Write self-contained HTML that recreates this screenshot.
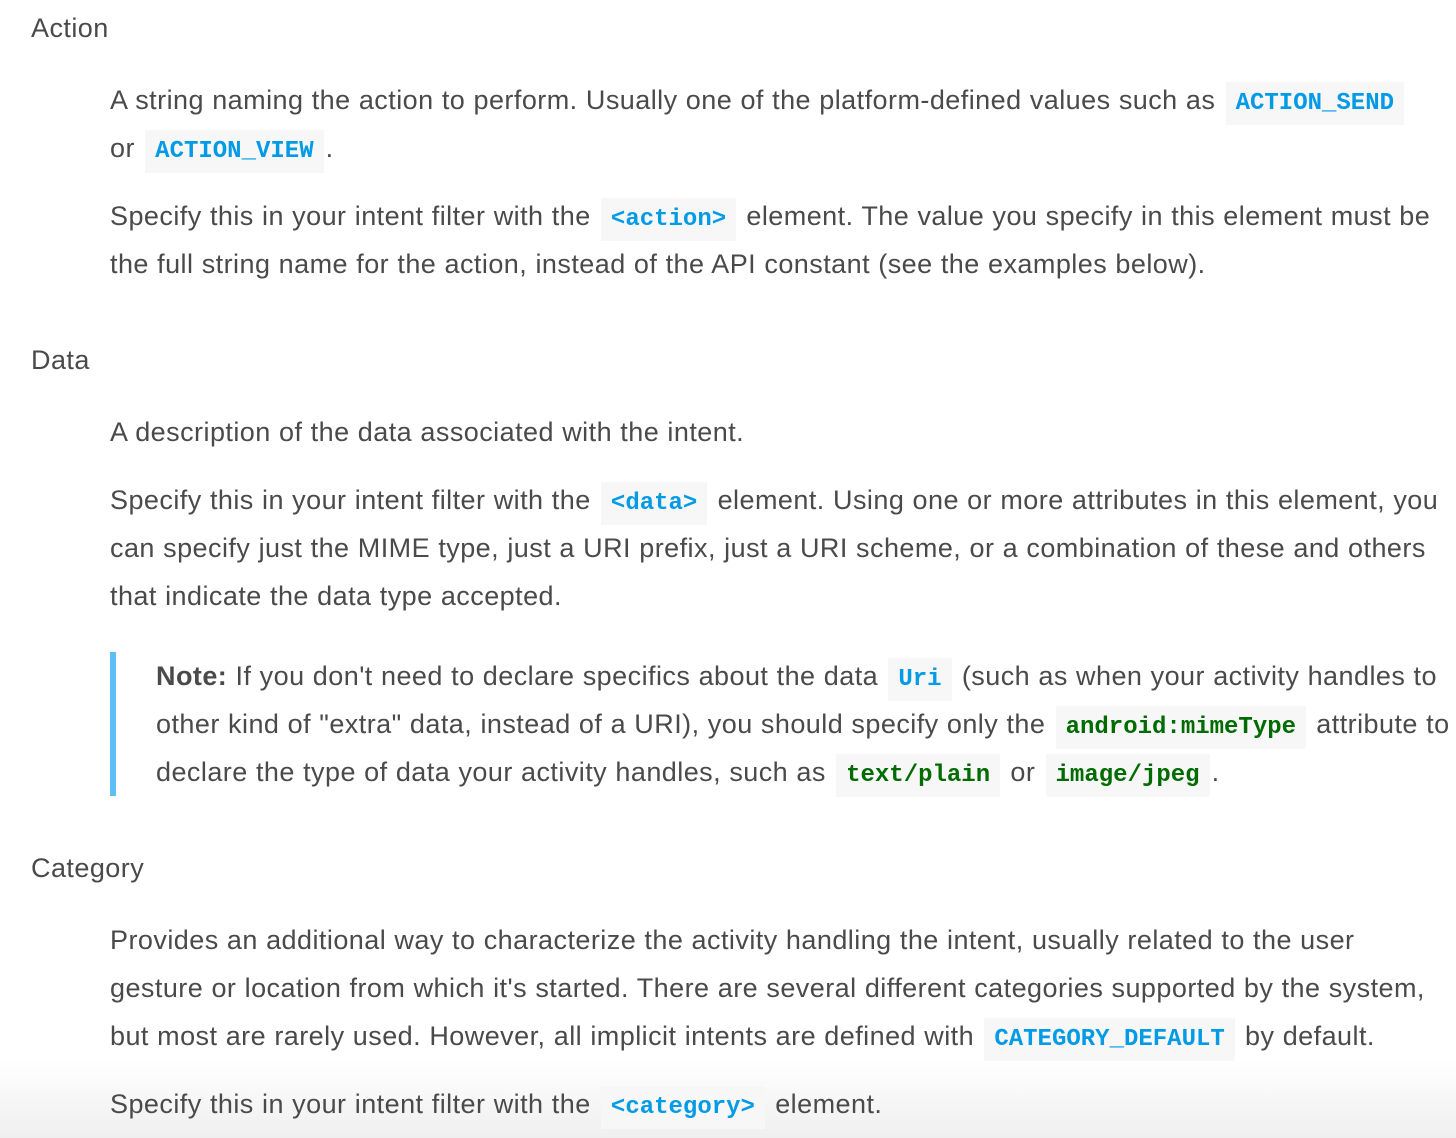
<!DOCTYPE html>
<html><head><meta charset="utf-8"><style>
html,body{margin:0;padding:0;background:#fff;width:1456px;height:1138px;overflow:hidden;position:relative}
.l{position:absolute;white-space:nowrap;font-family:"Liberation Sans",Arial,sans-serif;font-size:27px;line-height:48px;color:#4a4a4a;letter-spacing:0.45px;word-spacing:0.3px}
.h{left:31px}
.p{left:110px}
.n{left:156px}
code{font-family:"Liberation Mono",monospace;font-size:24px;font-weight:bold;letter-spacing:0;word-spacing:0;color:#039be5;background:#f7f7f7;padding:8px 10px;margin:0 2px}
code.g{color:#006b00}
.bar{position:absolute;left:110px;top:652px;width:6px;height:144px;background:#5ebff7}
.fade{position:absolute;left:0;top:1060px;width:1456px;height:78px;background:linear-gradient(#ffffff00,#efefef)}
</style></head><body>
<div class="l h" style="top:4px">Action</div>
<div class="l p" style="top:76px">A string naming the action to perform. Usually one of the platform-defined values such as <code>ACTION_SEND</code></div>
<div class="l p" style="top:124px">or <code>ACTION_VIEW</code>.</div>
<div class="l p" style="top:192px">Specify this in your intent filter with the <code>&lt;action&gt;</code> element. The value you specify in this element must be</div>
<div class="l p" style="top:240px">the full string name for the action, instead of the API constant (see the examples below).</div>
<div class="l h" style="top:336px">Data</div>
<div class="l p" style="top:408px">A description of the data associated with the intent.</div>
<div class="l p" style="top:476px">Specify this in your intent filter with the <code>&lt;data&gt;</code> element. Using one or more attributes in this element, you</div>
<div class="l p" style="top:524px">can specify just the MIME type, just a URI prefix, just a URI scheme, or a combination of these and others</div>
<div class="l p" style="top:572px">that indicate the data type accepted.</div>
<div class="bar"></div>
<div class="l n" style="top:652px"><b>Note:</b> If you don't need to declare specifics about the data <code>Uri</code> (such as when your activity handles to</div>
<div class="l n" style="top:700px">other kind of "extra" data, instead of a URI), you should specify only the <code class="g">android:mimeType</code> attribute to</div>
<div class="l n" style="top:748px">declare the type of data your activity handles, such as <code class="g">text/plain</code> or <code class="g">image/jpeg</code>.</div>
<div class="l h" style="top:844px">Category</div>
<div class="l p" style="top:916px">Provides an additional way to characterize the activity handling the intent, usually related to the user</div>
<div class="l p" style="top:964px">gesture or location from which it's started. There are several different categories supported by the system,</div>
<div class="l p" style="top:1012px">but most are rarely used. However, all implicit intents are defined with <code>CATEGORY_DEFAULT</code> by default.</div>
<div class="fade"></div>
<div class="l p" style="top:1080px">Specify this in your intent filter with the <code>&lt;category&gt;</code> element.</div>
</body></html>
